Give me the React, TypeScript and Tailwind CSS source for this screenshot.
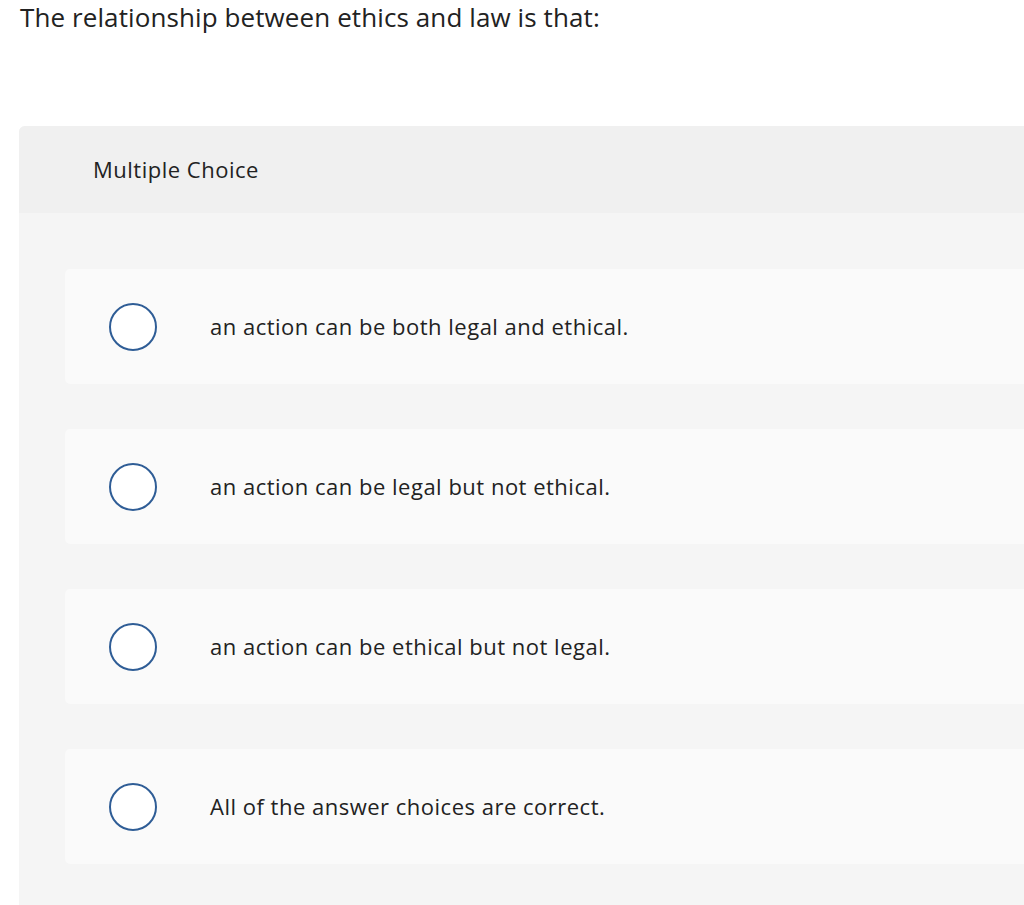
const choices = [
  'an action can be both legal and ethical.',
  'an action can be legal but not ethical.',
  'an action can be ethical but not legal.',
  'All of the answer choices are correct.',
];

function Choice({ label }: { label: string }) {
  return (
    <div className="flex h-[115px] items-center rounded-[5px] bg-[#fafafa] pl-[44px]">
      <span className="h-[48px] w-[48px] shrink-0 rounded-full border-2 border-[#2f5d96] bg-white" />
      <span className="ml-[53px] text-[22px] tracking-[0.5px] text-[#222]">{label}</span>
    </div>
  );
}

export default function App() {
  return (
    <div className="min-h-[905px] overflow-hidden bg-white font-['Open_Sans',sans-serif]">
      <h1 className="pl-[20px] pt-[1px] text-[26px] leading-[32px] tracking-[0.1px] text-[#222]">
        The relationship between ethics and law is that:
      </h1>
      <div className="ml-[19px] mt-[93px] w-[1040px] rounded-tl-[6px] bg-[#f5f5f5]">
        <div className="flex h-[87px] items-center rounded-tl-[6px] bg-[#f0f0f0] pl-[74px] text-[22px] tracking-[0.5px] text-[#222]">
          Multiple Choice
        </div>
        <div className="flex flex-col gap-[45px] pb-[45px] pl-[46px] pt-[56px]">
          {choices.map((c) => (
            <Choice key={c} label={c} />
          ))}
        </div>
      </div>
    </div>
  );
}
